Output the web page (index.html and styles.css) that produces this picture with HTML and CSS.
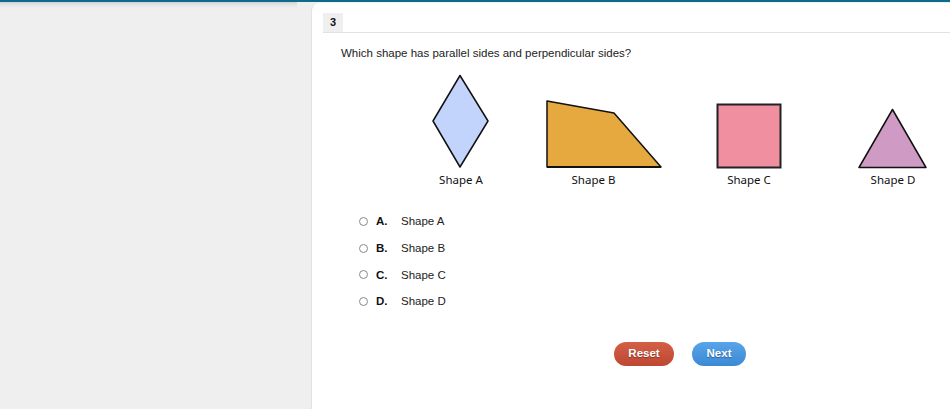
FILE: index.html
```html
<!DOCTYPE html>
<html>
<head>
<meta charset="utf-8">
<link rel="stylesheet" href="styles.css">
</head>
<body>
<div class="topbar"></div>
<div class="layout">
  <div class="sidebar"></div>
  <div class="gutter"></div>
  <main class="card">
    <div class="qhead"><span class="qnum">3</span></div>
    <p class="question">Which shape has parallel sides and perpendicular sides?</p>
    <div class="shapes">
      <figure class="fig fig-a">
        <svg width="58" height="95" viewBox="0 0 58 95"><polygon points="28,1.5 56,47 28,93 1,47" fill="#c2d4fb" stroke="#111" stroke-width="1.5" stroke-linejoin="round"/></svg>
        <figcaption>Shape A</figcaption>
      </figure>
      <figure class="fig fig-b">
        <svg width="117" height="69" viewBox="0 0 117 69"><polygon points="1,1 68,13 115,67 1,67" fill="#e5a93f" stroke="#111" stroke-width="1.5" stroke-linejoin="round"/><line x1="1" y1="67" x2="115" y2="67" stroke="#111" stroke-width="2"/></svg>
        <figcaption>Shape B</figcaption>
      </figure>
      <figure class="fig fig-c">
        <svg width="66" height="66" viewBox="0 0 66 66"><rect x="1.5" y="1.5" width="63" height="63" fill="#ef8f9f" stroke="#222" stroke-width="2"/></svg>
        <figcaption>Shape C</figcaption>
      </figure>
      <figure class="fig fig-d">
        <svg width="70" height="61" viewBox="0 0 70 61"><polygon points="34.5,1.5 68,59.5 1,59.5" fill="#cf9ac3" stroke="#111" stroke-width="1.5" stroke-linejoin="round"/></svg>
        <figcaption>Shape D</figcaption>
      </figure>
    </div>
    <ul class="options">
      <li class="option"><span class="radio"></span><b class="letter">A.</b><span>Shape A</span></li>
      <li class="option"><span class="radio"></span><b class="letter">B.</b><span>Shape B</span></li>
      <li class="option"><span class="radio"></span><b class="letter">C.</b><span>Shape C</span></li>
      <li class="option"><span class="radio"></span><b class="letter">D.</b><span>Shape D</span></li>
    </ul>
    <div class="actions">
      <button class="btn btn-reset">Reset</button>
      <button class="btn btn-next">Next</button>
    </div>
  </main>
</div>
</body>
</html>
```
FILE: styles.css
```css
html, body {
  margin: 0;
  padding: 0;
  height: 100%;
  overflow: hidden;
}
body {
  font-family: "Liberation Sans", Arial, sans-serif;
  background: #efefef;
  color: #222;
}
.topbar {
  height: 2px;
  background: #0f6b8b;
}
.layout {
  display: flex;
  height: 407px;
}
.sidebar {
  width: 297px;
  background: linear-gradient(#cfd3d5 0, #e6e6e6 3px, #efefef 6px);
}
.gutter {
  width: 14px;
  background: #efefef;
}
.card {
  flex: 1;
  background: #fff;
  margin-top: 1px;
  border-top-left-radius: 8px;
  border-left: 1px solid #e2e2e2;
  padding: 10px 0 0 11px;
}
.qhead {
  height: 19px;
  border-bottom: 1px solid #e2e2e2;
  display: flex;
}
.qnum {
  width: 20px;
  background: #efefef;
  font-weight: bold;
  font-size: 11px;
  line-height: 19px;
  text-align: center;
  color: #111;
}
.question {
  margin: 13px 0 0 18px;
  font-size: 11.5px;
  line-height: 14px;
  color: #222;
}
.shapes {
  display: flex;
  align-items: flex-end;
  margin-top: 14px;
  margin-left: 109px;
}
.fig {
  margin: 0;
  display: flex;
  flex-direction: column;
  align-items: center;
}
.fig svg {
  display: block;
}
.fig figcaption {
  font-family: "Noto Sans", sans-serif;
  font-size: 11.5px;
  line-height: 14px;
  margin-top: 4px;
  color: #111;
}
.fig-b { margin-left: 56px; }
.fig-b figcaption { margin-right: 22px; }
.fig-c { margin-left: 53px; }
.fig-d { margin-left: 76px; }
.options {
  list-style: none;
  margin: 21px 0 0 36px;
  padding: 0;
}
.option {
  display: flex;
  align-items: center;
  height: 26.7px;
  font-size: 11.5px;
  color: #222;
}
.radio {
  width: 7px;
  height: 7px;
  border: 1px solid #8a8a8a;
  border-radius: 50%;
  margin-right: 8px;
}
.letter {
  width: 25px;
  color: #111;
}
.actions {
  display: flex;
  gap: 18px;
  margin: 27px 0 0 291px;
}
.btn {
  height: 24px;
  border: none;
  border-radius: 12px;
  color: #fff;
  font-family: "Liberation Sans", Arial, sans-serif;
  font-weight: bold;
  font-size: 11.5px;
  text-shadow: 0 1px 1px rgba(0,0,0,0.35);
  padding: 0 0 2px;
}
.btn-reset {
  width: 60px;
  background: linear-gradient(#d45f47, #bd4732);
}
.btn-next {
  width: 54px;
  background: linear-gradient(#58a5ea, #3b88d5);
}
```
